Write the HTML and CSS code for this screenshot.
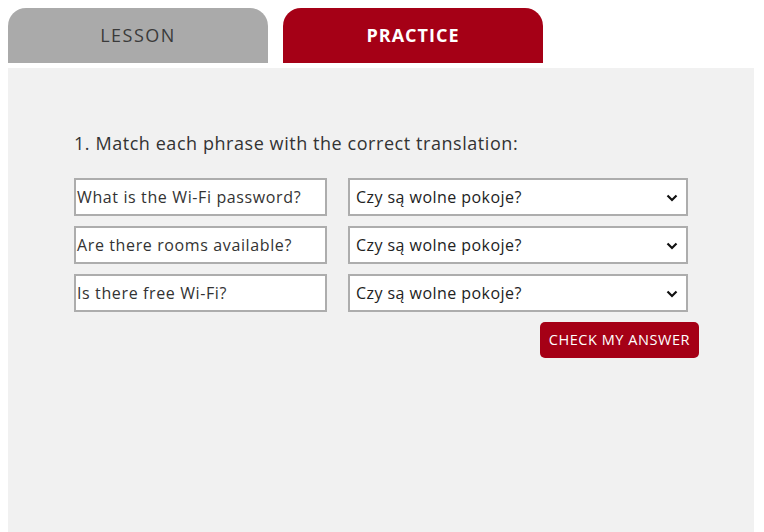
FILE: index.html
```html
<!DOCTYPE html>
<html lang="en">
<head>
<meta charset="utf-8">
<title>Practice</title>
<link rel="stylesheet" href="styles.css">
</head>
<body>
<div class="tabs">
  <div class="tab tab-lesson">LESSON</div>
  <div class="tab tab-practice">PRACTICE</div>
</div>
<div class="panel">
  <p class="question">1. Match each phrase with the correct translation:</p>
  <div class="rows">
    <div class="row">
      <div class="phrase">What is the Wi-Fi password?</div>
      <div class="select"><span>Czy są wolne pokoje?</span><svg class="chev" width="12" height="8" viewBox="0 0 12 8"><path d="M1.5 1.5 L6 6 L10.5 1.5" fill="none" stroke="#111" stroke-width="2.2"/></svg></div>
    </div>
    <div class="row">
      <div class="phrase">Are there rooms available?</div>
      <div class="select"><span>Czy są wolne pokoje?</span><svg class="chev" width="12" height="8" viewBox="0 0 12 8"><path d="M1.5 1.5 L6 6 L10.5 1.5" fill="none" stroke="#111" stroke-width="2.2"/></svg></div>
    </div>
    <div class="row">
      <div class="phrase">Is there free Wi-Fi?</div>
      <div class="select"><span>Czy są wolne pokoje?</span><svg class="chev" width="12" height="8" viewBox="0 0 12 8"><path d="M1.5 1.5 L6 6 L10.5 1.5" fill="none" stroke="#111" stroke-width="2.2"/></svg></div>
    </div>
  </div>
  <div class="actions">
    <button class="check">CHECK MY ANSWER</button>
  </div>
</div>
</body>
</html>
```
FILE: styles.css
```css
* { box-sizing: border-box; }
html, body { margin: 0; padding: 0; background: #fff; }
body {
  padding: 8px;
  font-family: "Open Sans", "Liberation Sans", sans-serif;
  color: #333;
}
.tabs {
  display: flex;
  gap: 15px;
  height: 55px;
}
.tab {
  width: 260px;
  height: 55px;
  border-radius: 18px 18px 0 0;
  display: flex;
  align-items: center;
  justify-content: center;
  font-size: 18px;
  padding-bottom: 1px;
}
.tab-lesson {
  background: #aaaaaa;
  color: #3a3a3a;
  letter-spacing: 1.5px;
}
.tab-practice {
  background: #a50016;
  color: #fff;
  font-weight: 700;
  letter-spacing: 1px;
}
.panel {
  margin-top: 5px;
  width: 746px;
  height: 470px;
  background: #f1f1f1;
  padding: 60px 0 0 66px;
}
.question {
  margin: 0;
  font-size: 18px;
  line-height: 28px;
  color: #333;
  letter-spacing: 0.56px;
  padding-top: 1px;
}
.rows {
  margin-top: 21px;
  display: flex;
  flex-direction: column;
  gap: 10px;
}
.row {
  display: flex;
  gap: 21px;
}
.phrase {
  width: 253px;
  height: 38px;
  background: #fff;
  border: 2px solid #adadad;
  font-size: 16px;
  line-height: 34px;
  padding-left: 1px;
  color: #333;
  white-space: nowrap;
  letter-spacing: 0.62px;
}
.select {
  width: 340px;
  height: 38px;
  background: #fff;
  border: 2px solid #adadad;
  font-size: 16px;
  line-height: 34px;
  padding: 0 8px 0 6px;
  color: #222;
  display: flex;
  align-items: center;
  justify-content: space-between;
  letter-spacing: 0.45px;
}
.chev { display: block; margin-top: 1px; }
.actions {
  width: 625px;
  display: flex;
  justify-content: flex-end;
  margin-top: 10px;
}
.check {
  background: #a50016;
  color: #fff;
  border: none;
  border-radius: 5px;
  height: 36px;
  padding: 0 9px 2px;
  font-family: "Open Sans", "Liberation Sans", sans-serif;
  font-size: 14.5px;
  letter-spacing: 0.55px;
  cursor: pointer;
}
```
